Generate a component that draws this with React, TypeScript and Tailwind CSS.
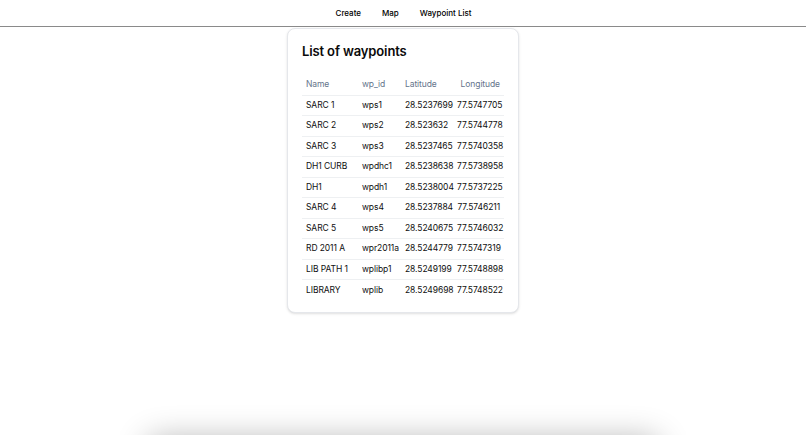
import React from 'react';

interface Waypoint {
  name: string;
  wpId: string;
  lat: string;
  lng: string;
}

const waypoints: Waypoint[] = [
  { name: 'SARC 1', wpId: 'wps1', lat: '28.5237699', lng: '77.5747705' },
  { name: 'SARC 2', wpId: 'wps2', lat: '28.523632', lng: '77.5744778' },
  { name: 'SARC 3', wpId: 'wps3', lat: '28.5237465', lng: '77.5740358' },
  { name: 'DH1 CURB', wpId: 'wpdhc1', lat: '28.5238638', lng: '77.5738958' },
  { name: 'DH1', wpId: 'wpdh1', lat: '28.5238004', lng: '77.5737225' },
  { name: 'SARC 4', wpId: 'wps4', lat: '28.5237884', lng: '77.5746211' },
  { name: 'SARC 5', wpId: 'wps5', lat: '28.5240675', lng: '77.5746032' },
  { name: 'RD 2011 A', wpId: 'wpr2011a', lat: '28.5244779', lng: '77.5747319' },
  { name: 'LIB PATH 1', wpId: 'wplibp1', lat: '28.5249199', lng: '77.5748898' },
  { name: 'LIBRARY', wpId: 'wplib', lat: '28.5249698', lng: '77.5748522' },
];

const NavBar: React.FC = () => (
  <nav className="h-[27px] border-b-[1.5px] border-[#8a8a8a] flex items-center justify-center gap-[21px] pl-[1px] text-[8px] font-medium text-black">
    <a href="#">Create</a>
    <a href="#">Map</a>
    <a href="#">Waypoint List</a>
  </nav>
);

const WaypointTable: React.FC = () => (
  <div className="w-[232px] mx-auto mt-px bg-white border border-[#e5e7eb] rounded-lg shadow-sm px-[14px] pt-[12px] pb-[12px]">
    <h1 className="text-[13px] font-semibold tracking-[-0.01em] text-[#0a0a0a] leading-[20px]">List of waypoints</h1>
    <table className="w-full table-fixed mt-[14px] text-[8.5px] tracking-[-0.01em] text-[#0f0f0f] whitespace-nowrap">
      <colgroup>
        <col className="w-[60px]" />
        <col className="w-[43px]" />
        <col className="w-[52px]" />
        <col />
      </colgroup>
      <thead>
        <tr className="h-[20px] border-b border-[#eef0f2] text-[#64748b]">
          <th className="font-normal text-left pl-[4px]">Name</th>
          <th className="font-normal text-left">wp_id</th>
          <th className="font-normal text-left">Latitude</th>
          <th className="font-normal text-right pr-[4px]">Longitude</th>
        </tr>
      </thead>
      <tbody>
        {waypoints.map((wp, i) => (
          <tr
            key={wp.wpId}
            className={`h-[20.5px] ${i < waypoints.length - 1 ? 'border-b border-[#eef0f2]' : ''}`}
          >
            <td className="pl-[4px]">{wp.name}</td>
            <td>{wp.wpId}</td>
            <td>{wp.lat}</td>
            <td className="text-right pr-[4px]">{wp.lng}</td>
          </tr>
        ))}
      </tbody>
    </table>
  </div>
);

export default function App() {
  return (
    <div className="min-h-screen bg-white" style={{ fontFamily: 'Inter, "Noto Sans", sans-serif' }}>
      <NavBar />
      <WaypointTable />
      <div className="w-[510px] h-[200px] mx-auto mt-[126px] bg-white rounded-lg shadow-[0_0_32px_rgba(0,0,0,0.3)]" />
    </div>
  );
}
